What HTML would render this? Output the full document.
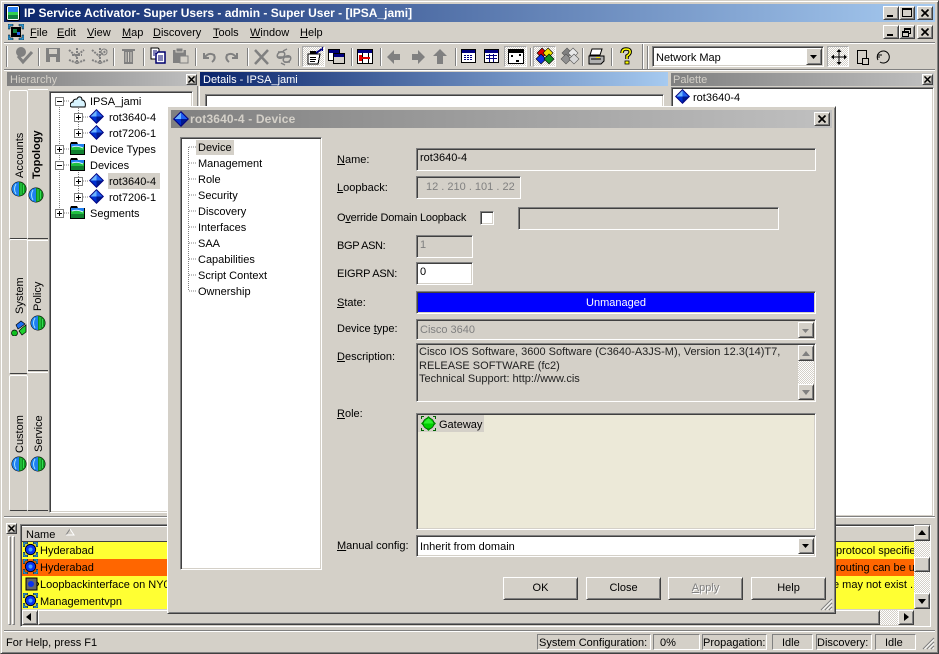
<!DOCTYPE html>
<html><head><meta charset="utf-8"><title>IP Service Activator</title>
<style>
html,body{margin:0;padding:0;background:#d4d0c8}
#r{position:relative;width:939px;height:654px;overflow:hidden;background:#d4d0c8;font:11px/14px "Liberation Sans",sans-serif;color:#000}
#r div,#r span.t,#r svg.a{position:absolute;box-sizing:border-box;white-space:nowrap}
.sk{border:1px solid;border-color:#808080 #fff #fff #808080;box-shadow:inset 1px 1px 0 #404040,inset -1px -1px 0 #d4d0c8}
.rs{border:1px solid;border-color:#fff #404040 #404040 #fff;box-shadow:inset 1px 1px 0 #d4d0c8,inset -1px -1px 0 #808080;background:#d4d0c8}
.eh{border:1px solid;border-color:#808080 #fff #fff #808080}
.pr{border:1px solid;border-color:#a8a8a8 #fff #fff #a8a8a8}
.dt{background:repeating-conic-gradient(#fff 0 25%,#d4d0c8 0 50%) 0 0/2px 2px}
.g{color:#808080}
.dis{color:#808080;text-shadow:1px 1px 0 #fff}
u{text-decoration:underline}
.b{text-align:center;line-height:21px}
.v{writing-mode:vertical-rl;transform:rotate(180deg)}
</style></head><body><div id="r">
<svg width="0" height="0" style="position:absolute"><defs>
<symbol id="dia" viewBox="0 0 16 16"><path d="M8 0L16 8 8 16 0 8Z" fill="#000080"/><path d="M8 1.500L8 8 1.500 8Z" fill="#6cb4ff"/><path d="M8 1.500L14.500 8 8 8Z" fill="#2060f0"/><path d="M1.500 8L8 8 8 14.500Z" fill="#0030d0"/><path d="M14.500 8L8 8 8 14.500Z" fill="#001a90"/></symbol>
<symbol id="fold" viewBox="0 0 16 13"><path d="M0 2L1 0H7L8 2H15V13H0Z" fill="#000"/><rect x="1" y="2" width="13" height="3" fill="#2080f0"/><rect x="1" y="5" width="13" height="3" fill="#20c040"/><rect x="1" y="8" width="13" height="4" fill="#108030"/><path d="M2 5Q7 3 13 6" stroke="#d0f0ff" fill="none"/></symbol>
<symbol id="glob" viewBox="0 0 16 16"><circle cx="8" cy="8" r="7.500" fill="#000"/><path d="M8 1A7 7 0 0 0 8 15Z" fill="#1e80f0"/><path d="M8 1A7 7 0 0 1 8 15Z" fill="#109020"/><path d="M5 3Q2 8 5 13" stroke="#a0e0ff" fill="none"/><path d="M10 2V14M12.500 4V12" stroke="#30e050" fill="none"/></symbol>
<symbol id="nod" viewBox="0 0 16 16"><path d="M0 0H5V2H2V5H0ZM11 0H16V5H14V2H11ZM0 11H2V14H5V16H0ZM14 11H16V16H11V14H14Z" fill="#30a0e0" stroke="#000" stroke-width=".5"/><circle cx="8" cy="8" r="5.500" fill="#0830f0" stroke="#000"/><circle cx="8" cy="8" r="2.200" fill="#40a0ff"/></symbol>
<symbol id="plus" viewBox="0 0 9 9"><rect x=".5" y=".5" width="8" height="8" fill="#fff" stroke="#808080"/><path d="M2 4.500H7M4.500 2V7" stroke="#000"/></symbol>
<symbol id="minus" viewBox="0 0 9 9"><rect x=".5" y=".5" width="8" height="8" fill="#fff" stroke="#808080"/><path d="M2 4.500H7" stroke="#000"/></symbol>
<symbol id="x" viewBox="0 0 8 8"><path d="M.5.5L7.500 7.500M7.500.5L.5 7.500" stroke="#000" stroke-width="1.700" fill="none"/></symbol>
</defs></svg>

<!-- main frame -->
<div style="left:0;top:0;width:939px;height:654px;border:1px solid;border-color:#d4d0c8 #404040 #404040 #d4d0c8;box-shadow:inset 1px 1px 0 #fff,inset -1px -1px 0 #808080"></div>
<div style="left:4px;top:4px;width:931px;height:18px;background:linear-gradient(90deg,#0a246a,#a6caf0)"></div>
<svg class="a" style="left:6px;top:5px" width="14" height="16"><rect x=".5" y=".5" width="13" height="15" rx="2" fill="#fff" stroke="#000"/><rect x="2" y="2" width="10" height="5" fill="#2a80f0"/><rect x="2" y="7" width="10" height="3" fill="#30d050"/><rect x="2" y="10" width="10" height="4" fill="#108040"/></svg>
<span class="t" style="left:24px;top:6px;color:#fff;font-weight:bold;font-size:12px">IP Service Activator- Super Users - admin - Super User - [IPSA_jami]</span>

<div class="rs" style="left:883px;top:6px;width:16px;height:14px"></div><div style="left:887px;top:15px;width:6px;height:2px;background:#000"></div>
<div class="rs" style="left:899px;top:6px;width:16px;height:14px"></div><div style="left:902px;top:8px;width:10px;height:9px;border:1px solid #000;border-top-width:2px"></div>
<div class="rs" style="left:917px;top:6px;width:16px;height:14px"></div><svg class="a" style="left:921px;top:9px" width="8" height="8"><use href="#x"/></svg>

<!-- menu -->
<svg class="a" style="left:8px;top:24px" width="16" height="16"><path d="M0 0H5V2H2V5H0ZM11 0H16V5H14V2H11ZM0 11H2V14H5V16H0ZM14 11H16V16H11V14H14Z" fill="#30a0e0" stroke="#000" stroke-width=".5"/><rect x="3" y="3" width="10" height="10" fill="#000"/><rect x="5" y="5" width="4" height="4" fill="#108040"/><rect x="9" y="8" width="3" height="3" fill="#2060f0"/></svg>
<span class="t" style="left:30px;top:26px"><u>F</u>ile</span>
<span class="t" style="left:57px;top:26px"><u>E</u>dit</span>
<span class="t" style="left:87px;top:26px"><u>V</u>iew</span>
<span class="t" style="left:122px;top:26px"><u>M</u>ap</span>
<span class="t" style="left:153px;top:26px"><u>D</u>iscovery</span>
<span class="t" style="left:213px;top:26px"><u>T</u>ools</span>
<span class="t" style="left:250px;top:26px"><u>W</u>indow</span>
<span class="t" style="left:300px;top:26px"><u>H</u>elp</span>
<div class="rs" style="left:883px;top:25px;width:16px;height:14px"></div><div style="left:887px;top:34px;width:6px;height:2px;background:#000"></div>
<div class="rs" style="left:899px;top:25px;width:16px;height:14px"></div><div style="left:904px;top:28px;width:7px;height:6px;border:1px solid #000;border-top-width:2px"></div><div style="left:902px;top:31px;width:7px;height:6px;border:1px solid #000;border-top-width:2px;background:#d4d0c8"></div>
<div class="rs" style="left:917px;top:25px;width:16px;height:14px"></div><svg class="a" style="left:921px;top:28px" width="8" height="8"><use href="#x"/></svg>

<div style="left:4px;top:42px;width:931px;height:2px;border-top:1px solid #808080;border-bottom:1px solid #fff"></div>
<div style="left:4px;top:69px;width:931px;height:2px;border-top:1px solid #808080;border-bottom:1px solid #fff"></div>

<!-- toolbar buttons pressed -->
<div class="pr dt" style="left:302px;top:46px;width:23px;height:21px"></div>
<div class="pr dt" style="left:504px;top:46px;width:23px;height:21px"></div>
<div class="pr dt" style="left:533px;top:46px;width:23px;height:21px"></div>
<div class="pr dt" style="left:827px;top:46px;width:22px;height:21px"></div>

<!-- toolbar icons -->
<svg class="a" style="left:0;top:0" width="939" height="72" shape-rendering="crispEdges">
<g fill="#808080"><rect x="6" y="46" width="1" height="21"/><rect x="38" y="48" width="1" height="18"/><rect x="113" y="48" width="1" height="18"/><rect x="143" y="48" width="1" height="18"/><rect x="195" y="48" width="1" height="18"/><rect x="247" y="48" width="1" height="18"/><rect x="298" y="48" width="1" height="18"/><rect x="351" y="48" width="1" height="18"/><rect x="380" y="48" width="1" height="18"/><rect x="455" y="48" width="1" height="18"/><rect x="530" y="48" width="1" height="18"/><rect x="582" y="48" width="1" height="18"/><rect x="611" y="48" width="1" height="18"/><rect x="642" y="44" width="1" height="25"/><rect x="647" y="46" width="1" height="23"/></g>
<g fill="#fff"><rect x="7" y="46" width="1" height="21"/><rect x="39" y="48" width="1" height="18"/><rect x="114" y="48" width="1" height="18"/><rect x="144" y="48" width="1" height="18"/><rect x="196" y="48" width="1" height="18"/><rect x="248" y="48" width="1" height="18"/><rect x="299" y="48" width="1" height="18"/><rect x="352" y="48" width="1" height="18"/><rect x="381" y="48" width="1" height="18"/><rect x="456" y="48" width="1" height="18"/><rect x="531" y="48" width="1" height="18"/><rect x="583" y="48" width="1" height="18"/><rect x="612" y="48" width="1" height="18"/><rect x="643" y="44" width="1" height="25"/><rect x="648" y="46" width="1" height="23"/></g>
</svg>
<svg class="a" style="left:0;top:0" width="939" height="72">
<!-- check -->
<circle cx="21" cy="52" r="5" fill="#808080"/><path d="M18 56L23 62 32 52" stroke="#808080" stroke-width="3" fill="none"/>
<!-- save -->
<path d="M46 48H60V62H46Z" fill="#808080"/><rect x="49" y="49" width="8" height="5" fill="#d4d0c8"/><rect x="50" y="57" width="6" height="5" fill="#d4d0c8"/>
<!-- anchors -->
<g stroke="#808080" fill="none" stroke-dasharray="2 1"><path d="M77 48V64M69 50L76 56 84 50M69 60L77 63 85 60M72 55L82 55" stroke-width="2"/><path d="M100 48V64M92 50L99 56 107 50M92 60L100 63 108 60" stroke-width="2"/></g><circle cx="104" cy="52" r="3" fill="none" stroke="#808080"/>
<!-- trash -->
<path d="M122 49H135V51H122ZM124 51H133V64H124Z" fill="#808080"/><path d="M126 52V62M128.500 52V62M131 52V62" stroke="#d4d0c8"/>
<!-- copy paste -->
<path d="M151 48H158L159 49V59H151Z" fill="#fff" stroke="#000"/><path d="M158 52H165V63H156V54Z" fill="#fff" stroke="#00006e" stroke-width="1.500"/><path d="M153 51H157M153 53H156M153 55H155M158 56H163M158 58H163M158 60H163" stroke="#00006e"/>
<path d="M173 50H186V63H173Z" fill="#808080"/><rect x="176" y="48" width="7" height="4" fill="#808080" stroke="#d4d0c8"/><rect x="180" y="56" width="8" height="7" fill="#d4d0c8" stroke="#808080"/>
<!-- undo redo -->
<path d="M204 53V58H209M205 57Q209 52 214 55 216 59 212 62" stroke="#808080" stroke-width="2" fill="none"/>
<path d="M237 53V58H232M236 57Q232 52 227 55 225 59 229 62" stroke="#808080" stroke-width="2" fill="none"/>
<!-- cut, link -->
<path d="M255 50L268 64M268 50L255 64" stroke="#808080" stroke-width="2.500"/>
<path d="M278 52H284M284 62H290M277 57H291M283 51L287 49M281 63L285 65" stroke="#808080" stroke-width="1.500" fill="none"/><ellipse cx="281" cy="55" rx="4" ry="3" fill="none" stroke="#808080" stroke-width="1.500" transform="rotate(-30 281 55)"/><ellipse cx="287" cy="59" rx="4" ry="3" fill="none" stroke="#808080" stroke-width="1.500" transform="rotate(-30 287 59)"/>
</svg>
<svg class="a" style="left:0;top:0" width="939" height="72" shape-rendering="crispEdges">
<!-- props -->
<path d="M308 54H320L318 64H308Z" fill="#fff" stroke="#000"/><rect x="310" y="51" width="6" height="3" fill="#000"/><path d="M310 57.500H316M310 59.500H316M310 61.500H315" stroke="#000"/><path d="M316 53L322 49" stroke="#000080" stroke-width="2"/><rect x="322" y="47" width="1" height="4" fill="#000080"/>
<!-- windows -->
<rect x="328.500" y="49.500" width="11" height="11" fill="#fff" stroke="#000"/><rect x="329" y="50" width="10" height="3" fill="#000080"/><rect x="333.500" y="53.500" width="11" height="10" fill="#d4d0c8" stroke="#000"/><rect x="334" y="54" width="10" height="3" fill="#000080"/>
<rect x="357.500" y="49.500" width="15" height="14" fill="#fff" stroke="#000"/><rect x="358" y="50" width="14" height="3" fill="#000080"/><path d="M362.500 53V63M368.500 53V63" stroke="#000"/><rect x="360" y="57" width="10" height="2" fill="#e00000"/><rect x="359" y="55" width="3" height="6" fill="#e00000"/>
</svg>
<svg class="a" style="left:0;top:0" width="939" height="72">
<path d="M387 57L394 50V54H400V60H394V64Z" fill="#808080"/><path d="M425 57L418 50V54H412V60H418V64Z" fill="#808080"/><path d="M440 49L447 56H443V64H437V56H433Z" fill="#808080"/>
<g shape-rendering="crispEdges"><rect x="461.500" y="49.500" width="14" height="13" fill="#fff" stroke="#000"/><rect x="462" y="50" width="13" height="3" fill="#000080"/><path d="M464 55.500H473M464 57.500H473M464 59.500H473" stroke="#000080" stroke-dasharray="2 1"/>
<rect x="484.500" y="49.500" width="14" height="13" fill="#fff" stroke="#000"/><rect x="485" y="50" width="13" height="3" fill="#000080"/><path d="M486 55.500H497M486 58.500H497M489.500 54V62M493.500 54V62" stroke="#000080"/>
<rect x="508.500" y="49.500" width="15" height="14" fill="#fff" stroke="#000"/><rect x="509" y="50" width="14" height="3" fill="#000"/><rect x="511" y="55" width="2" height="2" fill="#000"/><rect x="519" y="54" width="2" height="2" fill="#000"/><rect x="516" y="60" width="3" height="2" fill="#000"/></g>
<path d="M542 48L547 53 542 58 537 53Z" fill="#e00000" stroke="#000" stroke-width=".6"/><path d="M548 48L553 53 548 58 543 53Z" fill="#f0e000" stroke="#000" stroke-width=".6"/><path d="M541 54L546 59 541 64 536 59Z" fill="#1030e0" stroke="#000" stroke-width=".6"/><path d="M549 54L554 59 549 64 544 59Z" fill="#109020" stroke="#000" stroke-width=".6"/>
<path d="M567 48L572 53 567 58 562 53Z" fill="#808080" stroke="#555" stroke-width=".6"/><path d="M573 48L578 53 573 58 568 53Z" fill="#e8e8e8" stroke="#555" stroke-width=".6"/><path d="M566 54L571 59 566 64 561 59Z" fill="#909090" stroke="#555" stroke-width=".6"/><path d="M574 54L579 59 574 64 569 59Z" fill="#d8d8d8" stroke="#555" stroke-width=".6"/>
<!-- printer -->
<path d="M592 49H602L600 55H590Z" fill="#fff" stroke="#000"/><path d="M589 56H604V61L601 64H589Z" fill="#b0b0b0" stroke="#000"/><path d="M591 59H601" stroke="#000"/><rect x="596" y="57" width="4" height="1" fill="#f0e000"/>
<!-- help -->
<path d="M622 53Q622 49 626 49 631 49 630 53 629 55 627 56V59" stroke="#000" stroke-width="3.500" fill="none"/><path d="M622 53Q622 49 626 49 631 49 630 53 629 55 627 56V59" stroke="#ffff00" stroke-width="1.500" fill="none"/><rect x="625" y="61" width="4" height="3" fill="#ff0" stroke="#000" stroke-width=".8"/>
<!-- right tools -->
<path d="M839 50V64M832 57H846" stroke="#000"/><path d="M839 49L836.500 52H841.500ZM839 65L836.500 62H841.500ZM831 57L834 54.500V59.500ZM847 57L844 54.500V59.500Z" fill="#000"/>
<g shape-rendering="crispEdges" fill="none" stroke="#000"><rect x="857.500" y="50.500" width="9" height="13"/><rect x="862.500" y="58.500" width="6" height="6" fill="#d4d0c8"/></g>
<path d="M880 52A6 6 0 1 1 880 62" fill="none" stroke="#000"/><path d="M880 52A6 6 0 0 0 878 60" fill="none" stroke="#000"/><path d="M877 55H882M877 57H880" stroke="#000"/>
</svg>
<div class="sk" style="left:652px;top:46px;width:172px;height:21px;background:#fff"></div>
<span class="t" style="left:656px;top:51px">Network Map</span>
<div class="rs" style="left:806px;top:48px;width:16px;height:17px"></div><svg class="a" style="left:810px;top:55px" width="8" height="4"><path d="M0 0H7L3.500 4Z"/></svg>

<!-- panel titles -->
<div style="left:7px;top:72px;width:190px;height:14px;background:linear-gradient(90deg,#808080,#c0c0c0)"></div>
<span class="t" style="left:10px;top:73px;color:#d4d0c8">Hierarchy</span>
<div class="rs" style="left:186px;top:74px;width:11px;height:11px"></div><svg class="a" style="left:188px;top:76px" width="7" height="7"><use href="#x"/></svg>
<div style="left:200px;top:72px;width:468px;height:14px;background:linear-gradient(90deg,#0a246a,#a6caf0)"></div>
<span class="t" style="left:203px;top:73px;color:#fff">Details - IPSA_jami</span>
<div style="left:671px;top:73px;width:263px;height:13px;background:linear-gradient(90deg,#808080,#c0c0c0)"></div>
<span class="t" style="left:673px;top:73px;color:#d4d0c8">Palette</span>
<div class="rs" style="left:922px;top:74px;width:11px;height:11px"></div><svg class="a" style="left:924px;top:76px" width="7" height="7"><use href="#x"/></svg>

<!-- tabs -->
<div style="left:9px;top:90px;width:19px;height:149px;border:1px solid;border-color:#fff #fff #404040 #fff;border-radius:2px"></div>
<div style="left:9px;top:239px;width:19px;height:135px;border:1px solid;border-color:#fff #fff #404040 #fff;border-radius:2px"></div>
<div style="left:9px;top:375px;width:19px;height:136px;border:1px solid;border-color:#fff #fff #404040 #fff;border-radius:2px"></div>
<div style="left:28px;top:89px;width:20px;height:150px;border-bottom:1px solid #404040;border-top:1px solid #fff"></div>
<div style="left:28px;top:240px;width:20px;height:131px;border-bottom:1px solid #404040;border-top:1px solid #fff"></div>
<div style="left:28px;top:372px;width:20px;height:139px;border-bottom:1px solid #404040;border-top:1px solid #fff"></div>
<div class="v" style="left:13px;top:130px;height:48px">Accounts</div>
<div class="v" style="left:30px;top:127px;height:52px;font-weight:bold">Topology</div>
<div class="v" style="left:13px;top:278px;height:36px">System</div>
<div class="v" style="left:31px;top:282px;height:29px">Policy</div>
<div class="v" style="left:13px;top:415px;height:38px">Custom</div>
<div class="v" style="left:32px;top:413px;height:39px">Service</div>
<svg class="a" style="left:11px;top:181px" width="16" height="16"><use href="#glob"/></svg>
<svg class="a" style="left:28px;top:187px" width="16" height="16"><use href="#glob"/></svg>
<svg class="a" style="left:11px;top:320px" width="16" height="16"><circle cx="3.500" cy="13" r="3" fill="#10c020" stroke="#000" stroke-width=".7"/><path d="M5 5L10 1 14 4 10 7 7 9Z" fill="#2070f0" stroke="#000" stroke-width=".7"/><path d="M15 5L15 12 11 15 8 11 11 8Z" fill="#20d030" stroke="#000" stroke-width=".7"/></svg>
<svg class="a" style="left:30px;top:315px" width="16" height="16"><use href="#glob"/></svg>
<svg class="a" style="left:11px;top:456px" width="16" height="16"><use href="#glob"/></svg>
<svg class="a" style="left:30px;top:456px" width="16" height="16"><use href="#glob"/></svg>

<!-- tree -->
<div class="sk" style="left:49px;top:91px;width:144px;height:422px;background:#fff"></div>
<svg class="a" style="left:52px;top:94px" width="45" height="126">
<path d="M7.500 7V119M26.500 14V39M26.500 78V103M12 7H18M12 55H18M12 71H18M12 119H18M31 23H36M31 39H36M31 87H36M31 103H36" stroke="#808080" stroke-dasharray="1 1" fill="none"/></svg>
<svg class="a" style="left:55px;top:97px" width="9" height="9"><use href="#minus"/></svg>
<svg class="a" style="left:74px;top:113px" width="9" height="9"><use href="#plus"/></svg>
<svg class="a" style="left:74px;top:129px" width="9" height="9"><use href="#plus"/></svg>
<svg class="a" style="left:55px;top:145px" width="9" height="9"><use href="#plus"/></svg>
<svg class="a" style="left:55px;top:161px" width="9" height="9"><use href="#minus"/></svg>
<svg class="a" style="left:74px;top:177px" width="9" height="9"><use href="#plus"/></svg>
<svg class="a" style="left:74px;top:193px" width="9" height="9"><use href="#plus"/></svg>
<svg class="a" style="left:55px;top:209px" width="9" height="9"><use href="#plus"/></svg>
<svg class="a" style="left:70px;top:95px" width="16" height="13"><path d="M2 12C-1 12 0 7 3 7 3 4 6 4 7 4 8 1 12 1 12 5 15 5 16 9 15 12Z" fill="#d8f4ff" stroke="#000"/></svg>
<svg class="a" style="left:89px;top:109px" width="15" height="15"><use href="#dia"/></svg>
<svg class="a" style="left:89px;top:125px" width="15" height="15"><use href="#dia"/></svg>
<svg class="a" style="left:70px;top:142px" width="16" height="13"><use href="#fold"/></svg>
<svg class="a" style="left:70px;top:158px" width="16" height="13"><use href="#fold"/></svg>
<svg class="a" style="left:89px;top:173px" width="15" height="15"><use href="#dia"/></svg>
<svg class="a" style="left:89px;top:189px" width="15" height="15"><use href="#dia"/></svg>
<svg class="a" style="left:70px;top:206px" width="16" height="13"><use href="#fold"/></svg>
<div style="left:108px;top:173px;width:52px;height:16px;background:#d4d0c8"></div>
<span class="t" style="left:90px;top:95px">IPSA_jami</span>
<span class="t" style="left:109px;top:111px">rot3640-4</span>
<span class="t" style="left:109px;top:127px">rot7206-1</span>
<span class="t" style="left:90px;top:143px">Device Types</span>
<span class="t" style="left:90px;top:159px">Devices</span>
<span class="t" style="left:109px;top:175px">rot3640-4</span>
<span class="t" style="left:109px;top:191px">rot7206-1</span>
<span class="t" style="left:90px;top:207px">Segments</span>

<!-- details -->
<div style="left:197px;top:86px;width:3px;height:430px;border-left:1px solid #808080;border-right:1px solid #fff"></div>
<div class="sk" style="left:205px;top:94px;width:459px;height:420px;background:#fff"></div>
<!-- palette -->
<div class="sk" style="left:671px;top:87px;width:263px;height:430px;background:#fff"></div>
<svg class="a" style="left:675px;top:89px" width="15" height="15"><use href="#dia"/></svg>
<span class="t" style="left:693px;top:91px">rot3640-4</span>

<div style="left:4px;top:516px;width:931px;height:2px;border-top:1px solid #808080;border-bottom:1px solid #fff"></div>

<!-- bottom panel -->
<div class="rs" style="left:6px;top:523px;width:11px;height:11px"></div><svg class="a" style="left:8px;top:525px" width="7" height="7"><use href="#x"/></svg>
<div style="left:8px;top:536px;width:3px;height:89px;border:1px solid;border-color:#fff #808080 #808080 #fff"></div>
<div style="left:12px;top:536px;width:3px;height:89px;border:1px solid;border-color:#fff #808080 #808080 #fff"></div>
<div class="sk" style="left:20px;top:524px;width:911px;height:103px;background:#d4d0c8"></div>
<div style="left:22px;top:526px;width:892px;height:16px;border-top:1px solid #fff;border-bottom:1px solid #404040"></div>
<span class="t" style="left:26px;top:528px">Name</span>
<svg class="a" style="left:65px;top:528px" width="10" height="8"><path d="M1 7L5 1" fill="none" stroke="#808080"/><path d="M5 1L9 7H1" fill="none" stroke="#fff"/></svg>
<div style="left:22px;top:542px;width:892px;height:17px;background:#ffff33"></div>
<div style="left:22px;top:559px;width:892px;height:17px;background:#ff6600"></div>
<div style="left:22px;top:576px;width:892px;height:33px;background:#ffff33"></div>
<svg class="a" style="left:23px;top:542px" width="15" height="15"><use href="#nod"/></svg>
<svg class="a" style="left:23px;top:559px" width="15" height="15"><use href="#nod"/></svg>
<svg class="a" style="left:25px;top:576px" width="14" height="15"><rect x="1" y="2" width="11" height="12" fill="#666" stroke="#000"/><circle cx="6" cy="8" r="3" fill="#0830f0"/><path d="M12 6L14 8 12 10" fill="none" stroke="#000"/></svg>
<svg class="a" style="left:23px;top:593px" width="15" height="15"><use href="#nod"/></svg>
<span class="t" style="left:40px;top:544px">Hyderabad</span>
<span class="t" style="left:40px;top:561px">Hyderabad</span>
<span class="t" style="left:40px;top:578px">Loopbackinterface on NY0</span>
<span class="t" style="left:40px;top:595px">Managementvpn</span>
<span class="t" style="left:836px;top:544px;width:78px;overflow:hidden">protocol specifie</span>
<span class="t" style="left:836px;top:561px;width:78px;overflow:hidden">routing can be u</span>
<span class="t" style="left:833px;top:578px;width:81px;overflow:hidden">e may not exist .</span>
<div class="dt" style="left:914px;top:541px;width:16px;height:52px"></div>
<div class="rs" style="left:914px;top:525px;width:16px;height:16px"></div><svg class="a" style="left:918px;top:530px" width="8" height="5"><path d="M0 5H8L4 0Z"/></svg>
<div class="rs" style="left:914px;top:557px;width:16px;height:15px"></div>
<div class="rs" style="left:914px;top:593px;width:16px;height:16px"></div><svg class="a" style="left:918px;top:599px" width="8" height="5"><path d="M0 0H8L4 5Z"/></svg>
<div class="rs" style="left:22px;top:610px;width:16px;height:15px"></div><svg class="a" style="left:26px;top:613px" width="5" height="8"><path d="M5 0V8L0 4Z"/></svg>
<div class="rs" style="left:38px;top:610px;width:842px;height:15px"></div>
<div class="dt" style="left:880px;top:610px;width:18px;height:15px"></div>
<div class="rs" style="left:898px;top:610px;width:16px;height:15px"></div><svg class="a" style="left:904px;top:613px" width="5" height="8"><path d="M0 0V8L5 4Z"/></svg>

<!-- status -->
<div style="left:4px;top:630px;width:931px;height:2px;border-top:1px solid #808080;border-bottom:1px solid #fff"></div>
<span class="t" style="left:6px;top:636px">For Help, press F1</span>
<div class="eh" style="left:537px;top:634px;width:114px;height:16px"></div><span class="t" style="left:539px;top:636px">System Configuration:</span>
<div class="eh" style="left:653px;top:634px;width:47px;height:16px"></div><span class="t" style="left:660px;top:636px">0%</span>
<div class="eh" style="left:702px;top:634px;width:65px;height:16px"></div><span class="t" style="left:703px;top:636px">Propagation:</span>
<div class="eh" style="left:772px;top:634px;width:41px;height:16px"></div><span class="t" style="left:782px;top:636px">Idle</span>
<div class="eh" style="left:816px;top:634px;width:56px;height:16px"></div><span class="t" style="left:817px;top:636px">Discovery:</span>
<div class="eh" style="left:875px;top:634px;width:41px;height:16px"></div><span class="t" style="left:885px;top:636px">Idle</span>
<svg class="a" style="left:922px;top:637px" width="13" height="13"><path d="M12 1L1 12M12 5L5 12M12 9L9 12" stroke="#808080" stroke-width="1.200"/><path d="M12 2.500L2.500 12M12 6.500L6.500 12M12 10.500L10.500 12" stroke="#fff"/></svg>

<!-- dialog -->
<div class="rs" style="left:167px;top:106px;width:669px;height:508px"></div>
<div style="left:171px;top:110px;width:661px;height:18px;background:linear-gradient(90deg,#808080,#c0c0c0)"></div>
<svg class="a" style="left:173px;top:111px" width="16" height="16"><use href="#dia"/></svg>
<span class="t" style="left:190px;top:112px;font-weight:bold;color:#d4d0c8;font-size:12px;letter-spacing:.15px">rot3640-4 - Device</span>
<div class="rs" style="left:814px;top:112px;width:16px;height:14px"></div><svg class="a" style="left:818px;top:115px" width="8" height="8"><use href="#x"/></svg>

<div class="sk" style="left:180px;top:137px;width:142px;height:433px;background:#fff"></div>
<svg class="a" style="left:186px;top:140px" width="14" height="156"><path d="M2.500 7V150M3 7H11M3 23H11M3 39H11M3 55H11M3 71H11M3 87H11M3 103H11M3 119H11M3 135H11M3 151H11" stroke="#808080" stroke-dasharray="1 1" fill="none"/></svg>
<div style="left:196px;top:140px;width:38px;height:15px;background:#d4d0c8"></div>
<span class="t" style="left:198px;top:141px">Device</span>
<span class="t" style="left:198px;top:157px">Management</span>
<span class="t" style="left:198px;top:173px">Role</span>
<span class="t" style="left:198px;top:189px">Security</span>
<span class="t" style="left:198px;top:205px">Discovery</span>
<span class="t" style="left:198px;top:221px">Interfaces</span>
<span class="t" style="left:198px;top:237px">SAA</span>
<span class="t" style="left:198px;top:253px">Capabilities</span>
<span class="t" style="left:198px;top:269px">Script Context</span>
<span class="t" style="left:198px;top:285px">Ownership</span>

<span class="t" style="left:337px;top:153px"><u>N</u>ame:</span>
<span class="t" style="left:337px;top:181px"><u>L</u>oopback:</span>
<span class="t" style="left:337px;top:211px;letter-spacing:-.2px">O<u>v</u>erride Domain Loopback</span>
<span class="t" style="left:337px;top:239px;letter-spacing:-.35px">BGP ASN:</span>
<span class="t" style="left:337px;top:267px;letter-spacing:-.2px">EIGRP ASN:</span>
<span class="t" style="left:337px;top:296px"><u>S</u>tate:</span>
<span class="t" style="left:337px;top:322px">Device <u>t</u>ype:</span>
<span class="t" style="left:337px;top:350px"><u>D</u>escription:</span>
<span class="t" style="left:337px;top:407px"><u>R</u>ole:</span>
<span class="t" style="left:337px;top:539px"><u>M</u>anual config:</span>

<div class="sk" style="left:416px;top:148px;width:400px;height:23px"></div>
<span class="t" style="left:420px;top:151px">rot3640-4</span>
<div class="sk" style="left:416px;top:176px;width:105px;height:23px"></div>
<span class="t g" style="left:426px;top:180px">12 . 210 . 101 . 22</span>
<div class="sk" style="left:480px;top:211px;width:14px;height:14px;background:#fff"></div>
<div class="sk" style="left:518px;top:207px;width:261px;height:23px"></div>
<div class="sk" style="left:416px;top:235px;width:57px;height:23px"></div>
<span class="t g" style="left:420px;top:238px">1</span>
<div class="sk" style="left:416px;top:262px;width:57px;height:23px;background:#fff"></div>
<span class="t" style="left:420px;top:265px">0</span>
<div class="sk" style="left:416px;top:291px;width:400px;height:23px;background:#0000ff;color:#fff;text-align:center;line-height:23px">Unmanaged</div>
<div class="sk" style="left:416px;top:319px;width:400px;height:21px"></div>
<span class="t g" style="left:420px;top:323px">Cisco 3640</span>
<div class="rs" style="left:798px;top:322px;width:16px;height:16px"></div><svg class="a" style="left:802px;top:329px" width="8" height="4"><path d="M0 0H7L3.500 4Z" fill="#808080"/></svg>
<div class="sk" style="left:416px;top:343px;width:400px;height:59px"></div>
<span class="t" style="left:419px;top:346px;line-height:13.500px;color:#222">Cisco IOS Software, 3600 Software (C3640-A3JS-M), Version 12.3(14)T7,<br>RELEASE SOFTWARE (fc2)<br>Technical Support: http://www.cis</span>
<div class="dt" style="left:798px;top:360px;width:16px;height:24px"></div>
<div class="rs" style="left:798px;top:345px;width:16px;height:16px"></div><svg class="a" style="left:802px;top:351px" width="8" height="5"><path d="M0 5H8L4 0Z" fill="#808080"/></svg>
<div class="rs" style="left:798px;top:384px;width:16px;height:16px"></div><svg class="a" style="left:802px;top:390px" width="8" height="5"><path d="M0 0H8L4 5Z" fill="#808080"/></svg>
<div class="sk" style="left:416px;top:413px;width:400px;height:117px;background:#ece9d8"></div>
<div style="left:418px;top:415px;width:66px;height:17px;background:#d4d0c8"></div>
<svg class="a" style="left:421px;top:416px" width="15" height="15"><path d="M0 0H3V1H1V3H0ZM12 0H15V3H14V1H12ZM0 12H1V14H3V15H0ZM14 12H15V15H12V14H14Z" fill="#006000"/><path d="M7.500 0L15 7.500 7.500 15 0 7.500Z" fill="#00a000"/><circle cx="7.500" cy="7.500" r="5.500" fill="#00d000" stroke="#004000" stroke-width=".6"/><path d="M7.500 2L13 7.500H2Z" fill="#30f030"/></svg>
<span class="t" style="left:439px;top:418px">Gateway</span>
<div class="sk" style="left:416px;top:535px;width:400px;height:22px;background:#fff"></div>
<span class="t" style="left:420px;top:540px">Inherit from domain</span>
<div class="rs" style="left:798px;top:538px;width:16px;height:16px"></div><svg class="a" style="left:802px;top:544px" width="8" height="4"><path d="M0 0H7L3.500 4Z"/></svg>

<div class="rs b" style="left:503px;top:577px;width:75px;height:23px">OK</div>
<div class="rs b" style="left:586px;top:577px;width:75px;height:23px">Close</div>
<div class="rs b dis" style="left:668px;top:577px;width:75px;height:23px"><u>A</u>pply</div>
<div class="rs b" style="left:751px;top:577px;width:75px;height:23px">Help</div>
<svg class="a" style="left:820px;top:598px" width="13" height="13"><path d="M12 1L1 12M12 5L5 12M12 9L9 12" stroke="#808080" stroke-width="1.200"/><path d="M12 2.500L2.500 12M12 6.500L6.500 12M12 10.500L10.500 12" stroke="#fff"/></svg>
</div></body></html>
